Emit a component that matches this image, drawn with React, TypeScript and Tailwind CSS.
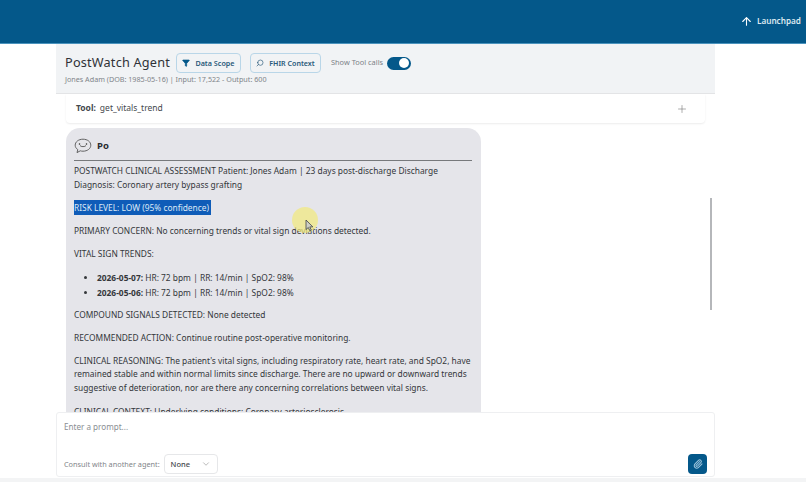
import { ChevronDown, Filter, Paperclip, Plus, Search, ArrowUp } from "lucide-react"

const font = { fontFamily: '"Noto Sans", sans-serif' }

function PoIcon() {
  return (
    <svg width="18" height="16" viewBox="0 0 18 16" fill="none" stroke="#555" strokeWidth="0.9">
      <path d="M9 1.2c4.4 0 7.8 2.600 7.800 6s-3.400 6-7.800 6c-1 0-1.900-.1-2.700-.4L3 14.600l.8-3C2.100 10.500 1.200 9 1.200 7.200c0-3.400 3.400-6 7.800-6z" />
      <path d="M6 7.500c.6 1.500 5.400 1.500 6 0" />
      <circle cx="5.500" cy="6" r="0.5" fill="#555" />
      <circle cx="12.500" cy="6" r="0.5" fill="#555" />
    </svg>
  )
}

export default function App() {
  return (
    <div className="h-[482px] w-[806px] flex flex-col overflow-hidden bg-white relative" style={font}>
      <header className="h-[44px] shrink-0 bg-[#04588a] border-b border-[#4a93bd] flex items-center justify-end pr-[5px]">
        <div className="flex items-center gap-[4px] text-[#dce9f1] text-[8.200px] font-semibold">
          <ArrowUp className="w-[13px] h-[13px] text-white" strokeWidth={2} />
          Launchpad
        </div>
      </header>

      <div className="ml-[56px] w-[659px] flex-1 min-h-0 flex flex-col">
        <div className="h-[50px] shrink-0 bg-[#f1f3f5] border-b border-[#e3e4e6] pl-[9px] pt-[9px]">
          <div className="flex items-center h-[20px]">
            <h1 className="w-[102px] whitespace-nowrap text-[12.700px] tracking-[0.2px] text-[#2f3237]">PostWatch Agent</h1>
            <button className="ml-[9px] h-[20px] w-[65px] border border-[#b9d6e8] rounded-[4px] flex items-center justify-center gap-[5px] text-[7.200px] font-semibold text-[#29597a]">
              <Filter className="w-[8px] h-[8px] fill-[#04588a] text-[#04588a]" />
              Data Scope
            </button>
            <button className="ml-[9px] h-[20px] w-[71px] border border-[#b9d6e8] rounded-[4px] flex items-center justify-center gap-[5px] text-[7.100px] font-semibold text-[#29597a]">
              <Search className="w-[8px] h-[8px] -scale-x-100 text-[#29597a]" />
              FHIR Context
            </button>
            <span className="ml-[10px] text-[7.400px] text-[#7c8186]">Show Tool calls</span>
            <div className="ml-[4px] w-[24px] h-[13px] rounded-full bg-[#04588a] flex items-center justify-end pr-[2px]">
              <div className="w-[10px] h-[10px] rounded-full bg-white"></div>
            </div>
          </div>
          <p className="mt-[1px] text-[7.200px] text-[#7f8489]">Jones Adam (DOB: 1985-05-16) | Input: 17,522 - Output: 600</p>
        </div>

        <div className="flex-1 min-h-0 overflow-hidden relative pl-[10px]">
          <div className="w-[639px] h-[29px] bg-white rounded-b-[4px] shadow-[0_1px_2px_rgba(0,0,0,0.08)] flex items-center pl-[10px] pr-[17px] text-[8.500px] text-[#44484d]">
            <span className="font-bold mr-[4px]">Tool:</span>
            get_vitals_trend
            <Plus className="ml-auto w-[12px] h-[12px] text-[#777]" strokeWidth={1.2} />
          </div>

          <div className="mt-[5px] w-[415px] bg-[#e5e5ea] rounded-t-[14px] pl-[8px] pr-[9px] pt-[9px] text-[8.400px] leading-[13.500px] text-[#34373b]">
            <div className="flex items-center gap-[5px] h-[17px]">
              <PoIcon />
              <span className="text-[9.500px] font-bold text-[#2b2d30]">Po</span>
            </div>
            <div className="mt-[6px] border-t border-[#77797c] pt-[3px]">
              <p>POSTWATCH CLINICAL ASSESSMENT Patient: Jones Adam | 23 days post-discharge Discharge Diagnosis: Coronary artery bypass grafting</p>
              <p className="mt-[9.500px]"><span className="bg-[#0f5cb8] text-[#dbe8f6] py-[2px] pr-[2px]">RISK LEVEL: LOW (95% confidence)</span></p>
              <p className="mt-[9.500px]">PRIMARY CONCERN: No concerning trends or vital sign deviations detected.</p>
              <p className="mt-[9.500px]">VITAL SIGN TRENDS:</p>
              <ul className="mt-[10.500px] pl-[23px] list-disc">
                <li className="mb-[1.500px]"><b>2026-05-07:</b> HR: 72 bpm | RR: 14/min | SpO2: 98%</li>
                <li><b>2026-05-06:</b> HR: 72 bpm | RR: 14/min | SpO2: 98%</li>
              </ul>
              <p className="mt-[8.500px]">COMPOUND SIGNALS DETECTED: None detected</p>
              <p className="mt-[9.500px]">RECOMMENDED ACTION: Continue routine post-operative monitoring.</p>
              <p className="mt-[9.500px]">CLINICAL REASONING: The patient's vital signs, including respiratory rate, heart rate, and SpO2, have remained stable and within normal limits since discharge. There are no upward or downward trends suggestive of deterioration, nor are there any concerning correlations between vital signs.</p>
              <p className="mt-[10.500px]">CLINICAL CONTEXT: Underlying conditions: Coronary arteriosclerosis</p>
            </div>
          </div>

          <div className="absolute left-[654px] top-[104px] w-[2px] h-[112px] bg-[#b5b7ba]"></div>
        </div>

        <div className="h-[65px] shrink-0 bg-white border border-[#eeeff1] rounded-[3px] px-[7px] pt-[8px] mb-[1px] relative">
          <p className="text-[8.100px] text-[#8a8e93]">Enter a prompt...</p>
          <div className="flex items-center mt-[21px]">
            <span className="whitespace-nowrap text-[7.300px] text-[#7f8489]">Consult with another agent:</span>
            <div className="ml-[4px] w-[54px] h-[20px] border border-[#e6e7e9] rounded-[4px] flex items-center pl-[6px] pr-[6px] text-[7.500px] font-medium text-[#44484d]">
              None
              <ChevronDown className="ml-auto w-[10px] h-[10px] text-[#777]" strokeWidth={1.2} />
            </div>
            <button className="ml-auto mr-[0px] w-[19px] h-[20px] rounded-[4px] bg-[#04588a] flex items-center justify-center">
              <Paperclip className="w-[10px] h-[10px] text-[#9cc4dc]" strokeWidth={2.5} />
            </button>
          </div>
        </div>
      </div>

      <div className="h-[4px] shrink-0 bg-[#f3f4f5]"></div>

      <div className="absolute left-[292px] top-[207px] w-[26px] h-[26px] rounded-full bg-[#f2ea7a]/70"></div>
      <svg className="absolute left-[305px] top-[219px]" width="9" height="13" viewBox="0 0 9 13">
        <path d="M1 1l0 9.500 2.300-2 1.500 3.300 1.500-.7-1.500-3.200 3 0z" fill="#cfd0c6" stroke="#3f4246" strokeWidth="0.8" />
      </svg>
    </div>
  )
}
